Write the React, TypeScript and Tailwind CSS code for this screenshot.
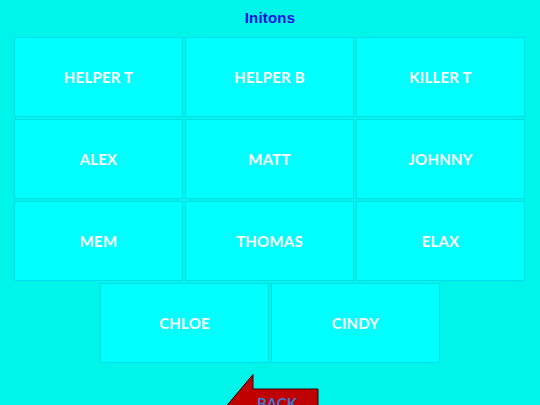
import React from "react";

const rows = [
  ["HELPER T", "HELPER B", "KILLER T"],
  ["ALEX", "MATT", "JOHNNY"],
  ["MEM", "THOMAS", "ELAX"],
];

const extra = ["CHLOE", "CINDY"];

const Cell = ({ name }: { name: string }) => (
  <button className="w-[169px] h-[80px] shrink-0 flex items-center justify-center bg-[#00ffff] border border-[#00dcea] text-white text-[15px] font-bold tracking-[0.2px] font-['Lato',sans-serif]">
    {name}
  </button>
);

const BackArrow = () => (
  <svg width="112" height="72" viewBox="0 0 112 72" className="block">
    <polygon
      points="43,0.5 43,15 108,15 108,55 43,55 43,70 14,35"
      fill="#c00000"
      stroke="#3a0000"
      strokeWidth="1"
    />
    <text
      x="47"
      y="35"
      fill="#3b78d8"
      fontFamily="Lato, sans-serif"
      fontWeight="700"
      fontSize="15"
    >
      BACK
    </text>
  </svg>
);

export default function App() {
  return (
    <div className="h-screen overflow-hidden bg-[#00f5ea] flex flex-col">
      <div className="h-[37px] shrink-0 flex items-center justify-center">
        <span className="text-[15px] font-black text-[#1010e6] font-['Liberation_Sans',sans-serif] tracking-[0.2px]">
          Initons
        </span>
      </div>
      <div className="shrink-0 flex flex-col gap-[2px] pl-[14px]">
        {rows.map((row, i) => (
          <div key={i} className="flex gap-[2px]">
            {row.map((name) => (
              <Cell key={name} name={name} />
            ))}
          </div>
        ))}
        <div className="flex gap-[2px] pl-[86px]">
          {extra.map((name) => (
            <Cell key={name} name={name} />
          ))}
        </div>
      </div>
      <div className="shrink-0 pl-[210px] pt-[11px]">
        <BackArrow />
      </div>
    </div>
  );
}
